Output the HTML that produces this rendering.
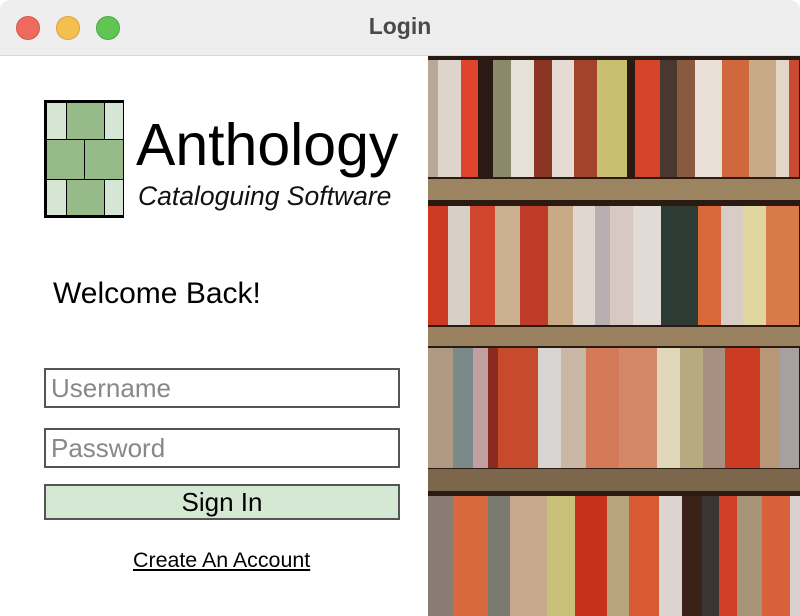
<!DOCTYPE html>
<html><head><style>
*{margin:0;padding:0;box-sizing:border-box}
body{width:800px;height:616px;overflow:hidden;background:#fff;font-family:"Liberation Sans",sans-serif;position:relative}
.tb{position:absolute;left:0;top:0;width:800px;height:56px;background:#efeeee;border-bottom:1px solid #d8d8d8;border-radius:10px 10px 0 0}
.dot{position:absolute;top:16px;width:24px;height:24px;border-radius:50%}
.title{position:absolute;top:13px;left:0;width:800px;text-align:center;font-weight:bold;font-size:23px;color:#4a4a4a}
.a{position:absolute}
.logo{position:absolute;left:44px;top:100px;width:80px;height:118px;border:2px solid #000;background:#000}
.c{position:absolute;border:1.5px solid #000}
.box{position:absolute;left:44px;width:356px;border:2px solid #555;font-size:26px;color:#888;padding-left:5px}
.shelf{position:absolute;left:428px;width:372px;display:flex}
.shelf div{height:100%}
</style></head><body>
<div class="tb"></div>
<div class="dot" style="left:16px;background:#ee6a5f;border:1px solid #d85548"></div>
<div class="dot" style="left:56px;background:#f5bf4f;border:1px solid #d9a23c"></div>
<div class="dot" style="left:96px;background:#61c554;border:1px solid #4ea844"></div>
<div class="title">Login</div>

<div class="logo">
<div class="c" style="left:0;top:0;width:21px;height:38px;background:#d5e7d4"></div>
<div class="c" style="left:20px;top:0;width:39px;height:38px;background:#97bb88"></div>
<div class="c" style="left:58px;top:0;width:20px;height:38px;background:#d5e7d4"></div>
<div class="c" style="left:0;top:37px;width:39px;height:41px;background:#97bb88"></div>
<div class="c" style="left:38px;top:37px;width:40px;height:41px;background:#97bb88"></div>
<div class="c" style="left:0;top:77px;width:21px;height:37px;background:#d5e7d4"></div>
<div class="c" style="left:20px;top:77px;width:39px;height:37px;background:#97bb88"></div>
<div class="c" style="left:58px;top:77px;width:20px;height:37px;background:#d5e7d4"></div>
</div>
<div class="a" style="left:136px;top:112px;font-size:59px;line-height:66px;color:#000">Anthology</div>
<div class="a" style="left:138px;top:181px;font-size:26.5px;font-style:italic;line-height:30px;color:#111">Cataloguing Software</div>
<div class="a" style="left:53px;top:277px;font-size:30px;line-height:34px">Welcome Back!</div>
<div class="box" style="top:368px;height:40px;line-height:37px">Username</div>
<div class="box" style="top:428px;height:40px;line-height:37px">Password</div>
<div class="box" style="top:484px;height:36px;line-height:33px;background:#d5e8d4;color:#000;text-align:center;padding:0">Sign In</div>
<div class="a" style="left:133px;top:547px;font-size:21.4px;text-decoration:underline;line-height:26px">Create An Account</div>

<div class="a" style="left:428px;top:56px;width:372px;height:560px;background:#2a1a12"></div>
<div class="a" style="left:428px;top:179px;width:372px;height:21px;background:#9c8460"></div>
<div class="a" style="left:428px;top:327px;width:372px;height:19px;background:#9a8260"></div>
<div class="a" style="left:428px;top:469px;width:372px;height:22px;background:#7c664c"></div>

<div class="shelf" style="top:60px;height:117px">
<div style="width:10px;background:#b8a898"></div><div style="width:23px;background:#ddd5cc"></div><div style="width:17px;background:#e0442a"></div><div style="width:15px;background:#2b1a14"></div><div style="width:18px;background:#8a8a6a"></div><div style="width:23px;background:#e6e0d8"></div><div style="width:18px;background:#8c3524"></div><div style="width:22px;background:#e4dcd4"></div><div style="width:23px;background:#a3432c"></div><div style="width:30px;background:#c8c070"></div><div style="width:8px;background:#2a1a14"></div><div style="width:25px;background:#d44428"></div><div style="width:17px;background:#4a3830"></div><div style="width:18px;background:#8a5a40"></div><div style="width:27px;background:#e8e0d6"></div><div style="width:27px;background:#d0683e"></div><div style="width:27px;background:#c8aa88"></div><div style="width:13px;background:#e2d6c6"></div><div style="width:10px;background:#c84a30"></div>
</div>
<div class="shelf" style="top:206px;height:119px">
<div style="width:20px;background:#cc3a24"></div><div style="width:22px;background:#d8d0c6"></div><div style="width:25px;background:#d0462c"></div><div style="width:25px;background:#cdb090"></div><div style="width:28px;background:#c03a28"></div><div style="width:25px;background:#c8aa86"></div><div style="width:22px;background:#e0d8d0"></div><div style="width:15px;background:#b8b0b0"></div><div style="width:23px;background:#d8c8c4"></div><div style="width:28px;background:#e2dad4"></div><div style="width:37px;background:#2c3c34"></div><div style="width:23px;background:#d8683a"></div><div style="width:22px;background:#d8ccc4"></div><div style="width:23px;background:#e0d6a0"></div><div style="width:33px;background:#d87a4a"></div>
</div>
<div class="shelf" style="top:348px;height:120px">
<div style="width:25px;background:#b09a84"></div><div style="width:20px;background:#7a8a88"></div><div style="width:15px;background:#c0a0a0"></div><div style="width:10px;background:#8a2a20"></div><div style="width:40px;background:#c84a2c"></div><div style="width:23px;background:#d8d4d4"></div><div style="width:25px;background:#cbb8a4"></div><div style="width:33px;background:#d47a58"></div><div style="width:38px;background:#d48868"></div><div style="width:23px;background:#e0d8b8"></div><div style="width:23px;background:#b8aa80"></div><div style="width:22px;background:#a89080"></div><div style="width:35px;background:#cc3c24"></div><div style="width:20px;background:#b89878"></div><div style="width:19px;background:#a8a0a0"></div>
</div>
<div class="shelf" style="top:496px;height:120px">
<div style="width:25px;background:#8a7c74"></div><div style="width:35px;background:#d8683e"></div><div style="width:22px;background:#7a7a70"></div><div style="width:37px;background:#c8a88c"></div><div style="width:28px;background:#c8c078"></div><div style="width:32px;background:#c8301e"></div><div style="width:22px;background:#b8a47c"></div><div style="width:30px;background:#d85a34"></div><div style="width:23px;background:#dcd4d0"></div><div style="width:20px;background:#3a2218"></div><div style="width:17px;background:#3a3434"></div><div style="width:18px;background:#d04028"></div><div style="width:25px;background:#a89478"></div><div style="width:28px;background:#d8603a"></div><div style="width:10px;background:#d8d0cc"></div>
</div>
</body></html>
